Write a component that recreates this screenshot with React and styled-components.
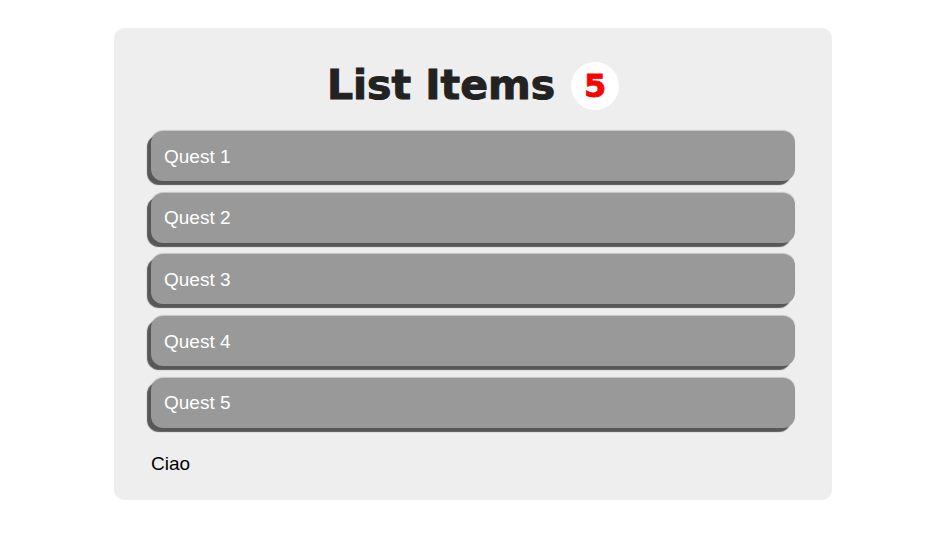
import React from 'react';
import styled, { createGlobalStyle } from 'styled-components';

const GlobalStyle = createGlobalStyle`
  body {
    margin: 0;
    background: #fff;
    font-family: "Liberation Sans", Arial, sans-serif;
  }
`;

const Page = styled.div`
  padding: 28px 1px 0 0;
  display: flex;
  justify-content: center;
`;

const Card = styled.div`
  width: 718px;
  box-sizing: border-box;
  padding: 34px 37px 25px;
  background: #eee;
  border-radius: 10px;
`;

const Header = styled.div`
  display: flex;
  align-items: center;
  justify-content: center;
  gap: 16px;
  height: 48px;
`;

const Title = styled.h1`
  margin: 0 0 3px;
  font-family: "DejaVu Sans", sans-serif;
  font-weight: bold;
  font-size: 41px;
  color: #222;
  -webkit-text-stroke: 1px #222;
`;

const Badge = styled.span`
  width: 48px;
  height: 48px;
  border-radius: 50%;
  background: #fff;
  display: flex;
  align-items: center;
  justify-content: center;
  font-family: "DejaVu Sans", sans-serif;
  font-weight: bold;
  font-size: 32px;
  color: #f00;
  -webkit-text-stroke: 0.8px #f00;
`;

const List = styled.ul`
  list-style: none;
  margin: 21px 0 0;
  padding: 0;
  display: flex;
  flex-direction: column;
  gap: 11.7px;
`;

const Item = styled.li`
  box-sizing: border-box;
  height: 50px;
  display: flex;
  align-items: center;
  padding: 1px 13px 0;
  background: #999;
  border-radius: 12px;
  box-shadow: -4px 4px 1px #575757, 0 -1px 1px #c4c4c4;
  color: #fff;
  font-size: 19px;
`;

const Footer = styled.p`
  margin: 25px 0 0;
  font-size: 19px;
  color: #000;
`;

const quests = ['Quest 1', 'Quest 2', 'Quest 3', 'Quest 4', 'Quest 5'];

const App = () => {
  return (
    <>
      <GlobalStyle />
      <Page>
        <Card>
          <Header>
            <Title>List Items</Title>
            <Badge>{quests.length}</Badge>
          </Header>
          <List>
            {quests.map((q) => (
              <Item key={q}>{q}</Item>
            ))}
          </List>
          <Footer>Ciao</Footer>
        </Card>
      </Page>
    </>
  );
};

export default App;
